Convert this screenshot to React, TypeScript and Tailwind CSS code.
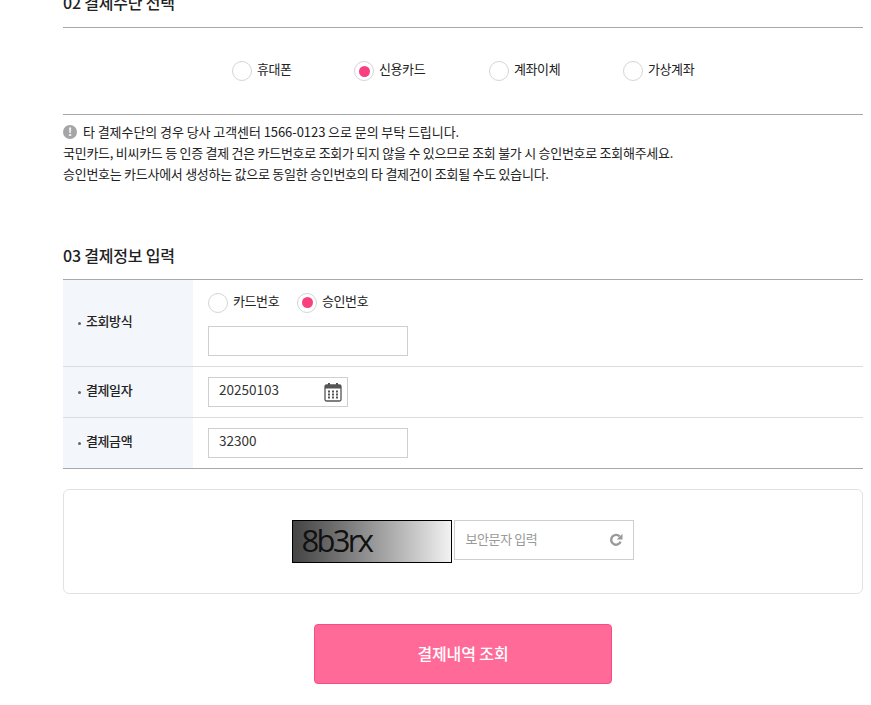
import React from "react";

const font = "font-['Noto_Sans_CJK_KR','Noto_Sans',sans-serif]";

function Radio({ label, checked, className }: { label: string; checked?: boolean; className?: string }) {
  return (
    <label className={`flex items-center ${className ?? ""}`}>
      <span className="flex h-[20px] w-[20px] items-center justify-center rounded-full border border-[#d5d5d5] bg-white">
        {checked && <span className="h-[11px] w-[11px] rounded-full bg-[#f83f7f]" />}
      </span>
      <span className="mb-[5px] ml-[5px] text-[13px] leading-[19px] tracking-[-0.4px] text-[#222]">{label}</span>
    </label>
  );
}

function Row({ label, children, h, border }: { label: string; children: React.ReactNode; h: string; border?: boolean }) {
  return (
    <div className={`flex ${h} ${border ? "border-b border-[#dcdcdc]" : ""}`}>
      <div className="flex w-[130px] shrink-0 items-center bg-[#f3f6fa] pl-[15px] text-[13px] font-medium tracking-[-0.4px] text-[#222]">
        <span className="mr-[5px] h-[3px] w-[3px] rounded-full bg-[#666]" />
        <span className="pb-[4px]">{label}</span>
      </div>
      <div className="flex-1 pl-[15px]">{children}</div>
    </div>
  );
}

function CalendarIcon() {
  return (
    <svg width="18" height="20" viewBox="0 0 18 20" fill="none">
      <rect x="1" y="3" width="16" height="16" rx="1.5" stroke="#555" strokeWidth="1.3" />
      <rect x="1" y="3" width="16" height="3.5" fill="#555" />
      <rect x="4" y="1" width="2" height="4" fill="#555" />
      <rect x="12" y="1" width="2" height="4" fill="#555" />
      <g fill="#555">
        <rect x="4" y="8.5" width="2" height="2" />
        <rect x="8" y="8.5" width="2" height="2" />
        <rect x="12" y="8.5" width="2" height="2" />
        <rect x="4" y="11.5" width="2" height="2" />
        <rect x="8" y="11.5" width="2" height="2" />
        <rect x="12" y="11.5" width="2" height="2" />
        <rect x="4" y="14.5" width="2" height="2" />
        <rect x="8" y="14.5" width="2" height="2" />
        <rect x="12" y="14.5" width="2" height="2" />
      </g>
    </svg>
  );
}

function RefreshIcon() {
  return (
    <svg width="14" height="14" viewBox="0 0 14 14" fill="none">
      <path d="M11.6 8.6A4.9 4.9 0 1 1 10.6 3.4" stroke="#999" strokeWidth="2.4" />
      <path d="M13.5 .8v5.8H7.7z" fill="#999" />
    </svg>
  );
}

export default function App() {
  return (
    <div className={`h-[705px] overflow-hidden bg-white ${font}`}>
      <div className="mt-[-10px] ml-[63px] w-[800px]">
        <h2 className="h-[37px] text-[16px] leading-[24px] font-medium tracking-[-0.2px] text-[#222]">02 결제수단 선택</h2>
        <div className="flex h-[88px] items-center border-y border-[#a8a8a8] pl-[169px]">
          <Radio label="휴대폰" className="w-[122px]" />
          <Radio label="신용카드" checked className="w-[135px]" />
          <Radio label="계좌이체" className="w-[134px]" />
          <Radio label="가상계좌" />
        </div>

        <div className="pt-[6px] text-[13px] leading-[21px] tracking-[-0.27px] text-[#222]">
          <p className="flex items-center tracking-[-0.07px]">
            <span className="mr-[6px] flex h-[14px] w-[14px] items-center justify-center rounded-full bg-[#a5a5a8] text-[11px] leading-none font-bold text-white">!</span>
            타 결제수단의 경우 당사 고객센터 1566-0123 으로 문의 부탁 드립니다.
          </p>
          <p>국민카드, 비씨카드 등 인증 결제 건은 카드번호로 조회가 되지 않을 수 있으므로 조회 불가 시 승인번호로 조회해주세요.</p>
          <p>승인번호는 카드사에서 생성하는 값으로 동일한 승인번호의 타 결제건이 조회될 수도 있습니다.</p>
        </div>

        <h2 className="mt-[59px] h-[36px] text-[16px] leading-[24px] font-medium tracking-[-0.2px] text-[#222]">03 결제정보 입력</h2>

        <div className="border-y border-[#a8a8a8]">
          <Row label="조회방식" h="h-[87px]" border>
            <div className="flex h-[46px] items-center pb-[1px]">
              <Radio label="카드번호" className="w-[89px]" />
              <Radio label="승인번호" checked />
            </div>
            <div className="h-[30px] w-[200px] border border-[#cfcfcf]" />
          </Row>
          <Row label="결제일자" h="h-[51px]" border>
            <div className="mt-[10px] flex h-[30px] w-[140px] items-center justify-between border border-[#cfcfcf] pr-[5px] pl-[10px] text-[13.5px] text-[#333]">
              <span className="pb-[5px]">20250103</span>
              <CalendarIcon />
            </div>
          </Row>
          <Row label="결제금액" h="h-[50px]">
            <div className="mt-[10px] flex h-[30px] w-[200px] items-center border border-[#cfcfcf] pb-[5px] pl-[10px] text-[13.5px] text-[#333]">32300</div>
          </Row>
        </div>

        <div className="mt-[20px] flex h-[105px] justify-center rounded-[6px] border border-[#e2e2e2] pt-[30px] pr-[1px]">
          <div className="flex h-[43px] w-[160px] items-center border border-black bg-gradient-to-r from-[#444] to-[#f2f2f2] pb-[3px] pl-[9px] font-['Open_Sans',sans-serif] text-[31px] font-medium tracking-[-2.7px] text-[#111]">
            8b3rx
          </div>
          <div className="ml-[2px] flex h-[40px] w-[180px] items-center justify-between border border-[#cfcfcf] pr-[10px] pl-[11px] text-[13px] tracking-[-0.4px] text-[#999]">
            <span className="pb-[3px]">보안문자 입력</span>
            <RefreshIcon />
          </div>
        </div>

        <div className="mt-[30px] flex justify-center">
          <button className="h-[60px] w-[298px] rounded-[4px] border border-[#f94b85] bg-[#ff6a98] pb-[2px] text-[16px] font-medium tracking-[-0.1px] text-white">결제내역 조회</button>
        </div>
      </div>
    </div>
  );
}
